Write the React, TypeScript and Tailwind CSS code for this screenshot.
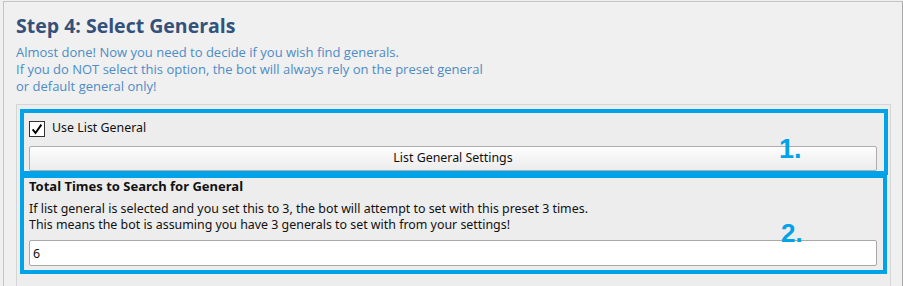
export default function App() {
  return (
    <div className="w-[903px] h-[286px] overflow-hidden bg-[#f0f0f0] pt-px pl-[3px]">
      <div className="relative w-[900px] h-[300px] border-t border-l border-r border-t-[#c4c4c4] border-l-[#c4c4c4] border-r-[#a8a8a8] px-[12px] pt-[11px]">
        <h1 className="text-[19.5px] leading-[26px] font-bold text-[#33517a] font-['Open_Sans',sans-serif]">
          Step 4: Select Generals
        </h1>
        <div className="mt-[5px] text-[13px] leading-[17px] text-[#4d8cc6] font-['Open_Sans',sans-serif]">
          <p>Almost done! Now you need to decide if you wish find generals.</p>
          <p>If you do NOT select this option, the bot will always rely on the preset general</p>
          <p>or default general only!</p>
        </div>

        <div className="mt-[9px] w-[875px] h-[200px] border border-[#d6d6d6] bg-[#ededed] pl-[3px] pt-[4px] font-['Noto_Sans',sans-serif] text-[12.4px] text-[#111]">
          {/* 1. list general */}
          <div className="w-[868px] h-[66px] border-4 border-[#00a2e8] px-[5px] pt-[8px]">
            <label className="flex items-center gap-[7px] h-[15px]">
              <span className="w-[16px] h-[16px] border border-[#333] bg-white flex items-center justify-center">
                <svg viewBox="0 0 16 16" className="w-[14px] h-[14px]">
                  <path d="M3 8.5 L6.3 12.5 L13 3" fill="none" stroke="#000" strokeWidth="2.2" />
                </svg>
              </span>
              <span>Use List General</span>
            </label>
            <button className="mt-[10px] w-[848px] h-[25px] rounded-[2px] border border-[#adadad] bg-gradient-to-b from-[#fdfdfd] to-[#ececec] text-[12.4px]">
              List General Settings
            </button>
          </div>

          {/* 2. total times */}
          <div className="w-[867px] h-[99px] border-4 border-t-[3px] border-[#00a2e8] px-[5px]">
            <p className="font-bold text-[13px] leading-[16px]">Total Times to Search for General</p>
            <p className="mt-[7px] leading-[16px]">
              If list general is selected and you set this to 3, the bot will attempt to set with this preset 3 times.
            </p>
            <p className="leading-[16px]">
              This means the bot is assuming you have 3 generals to set with from your settings!
            </p>
            <input
              readOnly
              value="6"
              className="mt-[7px] w-[848px] h-[26px] rounded-[2px] border border-[#a8a8a8] bg-white px-[3px] text-[12.4px] outline-none"
            />
          </div>
        </div>

        <span className="absolute left-[775px] top-[132px] text-[27px] leading-[30px] font-bold text-[#00a2e8] font-['Liberation_Sans',sans-serif]">
          1.
        </span>
        <span className="absolute left-[777px] top-[216px] text-[26px] leading-[30px] font-bold text-[#00a2e8] font-['Liberation_Sans',sans-serif]">
          2.
        </span>
      </div>
    </div>
  );
}
